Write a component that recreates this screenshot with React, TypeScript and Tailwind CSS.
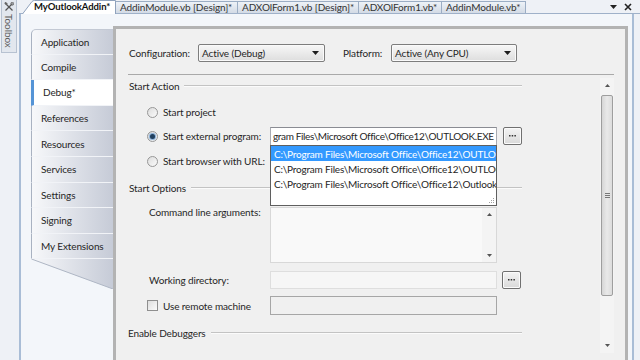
import React from "react";

function Radio({ checked }: { checked?: boolean }) {
  return (
    <span className="w-[11px] h-[11px] rounded-full border border-[#979797] bg-linear-to-br from-[#dcdcdc] to-[#fbfbfb] flex items-center justify-center shrink-0">
      {checked && <span className="w-[5px] h-[5px] rounded-full bg-[#21405f] shadow-[0_0_1px_1px_#7fa9d6]" />}
    </span>
  );
}

function Check() {
  return <span className="w-[11px] h-[11px] border border-[#8f8f8f] bg-linear-to-br from-[#dedede] to-[#fbfbfb] shrink-0" />;
}

function Combo({ text, w }: { text: string; w: string }) {
  return (
    <div className={`${w} h-[18px] border border-[#7d7d7d] rounded-[2px] bg-linear-to-b from-[#f7f7f7] to-[#dedede] flex items-center pl-[3px] pr-[5px] shadow-[inset_0_0_0_1px_#fafafa]`}>
      <span className="flex-1 whitespace-nowrap">{text}</span>
      <svg width="7" height="4" viewBox="0 0 7 4"><path d="M0 0h7L3.5 4z" fill="#1e1e1e" /></svg>
    </div>
  );
}

function Dots() {
  return (
    <div className="w-[19px] h-[18px] border border-[#707070] rounded-[2px] bg-linear-to-b from-[#f4f4f4] to-[#d9d9d9] flex items-center justify-center shrink-0 shadow-[inset_0_0_0_1px_#fbfbfb]">
      <svg width="7" height="2" viewBox="0 0 7 2"><rect x="0" y="0" width="1.5" height="1.5" fill="#333" /><rect x="2.7" y="0" width="1.5" height="1.5" fill="#333" /><rect x="5.4" y="0" width="1.5" height="1.5" fill="#333" /></svg>
    </div>
  );
}

function Group({ title, className }: { title: string; className: string }) {
  return (
    <div className={`flex items-center h-[14px] ${className}`}>
      <span className="whitespace-nowrap">{title}</span>
      <div className="flex-1 ml-[5px] h-[2px] border-t border-[#c3c3c3] border-b border-b-[#fbfbfb]" />
    </div>
  );
}

function UpArrow() {
  return <svg width="5" height="3" viewBox="0 0 5 3"><path d="M0 3h5L2.5 0z" fill="#555" /></svg>;
}
function DownArrow() {
  return <svg width="5" height="3" viewBox="0 0 5 3"><path d="M0 0h5L2.5 3z" fill="#555" /></svg>;
}

const navItems = ["Application", "Compile", "Debug*", "References", "Resources", "Services", "Settings", "Signing", "My Extensions"];

const P1 = "C:\\Program Files\\Microsoft Office\\Office12\\OUTLOOK.EXE";
const P3 = "C:\\Program Files\\Microsoft Office\\Office12\\Outlook.exe";

export default function App() {
  return (
    <div className="w-[640px] h-[360px] overflow-hidden flex bg-[#eef1f6] text-[#262626] font-['Lato',sans-serif] text-[10px] tracking-[-0.12px] leading-[14px]">
      {/* Toolbox strip */}
      <div className="w-[19px] shrink-0 pl-[1px]">
        <div className="w-[16px] h-[53px] border border-t-0 border-[#b7c2d1] bg-[#e2e7ee] flex flex-col items-center pt-[2px]">
          <svg width="10" height="10" viewBox="0 0 10 10">
            <path d="M1.5 1.5L8.5 8.5" stroke="#555" strokeWidth="1.3" />
            <path d="M8.5 1.5L1.5 8.5" stroke="#555" strokeWidth="1.3" />
            <rect x="0.5" y="0.5" width="3" height="2" fill="#666" transform="rotate(45 2 1.5)" />
            <circle cx="8.3" cy="1.7" r="1.4" fill="none" stroke="#666" strokeWidth="1" />
          </svg>
          <span className="[writing-mode:vertical-rl] text-[#5c5c5c] mt-[2px] leading-[14px]">Toolbox</span>
        </div>
      </div>

      <div className="flex-1 flex flex-col min-w-0">
        {/* Tab strip */}
        <div className="h-[14px] shrink-0 flex items-end border-b border-[#9fb1c9] pl-[3px]">
          <div className="relative w-[94px] h-[14px] -mb-px shrink-0">
            <svg className="absolute inset-0" width="94" height="14" viewBox="0 0 94 14">
              <path d="M0.5 14 L10 1.5 Q11 0.5 12.5 0.5 H93.5 V14" fill="#ffffff" stroke="#8fa2bc" />
            </svg>
            <span className="relative block pl-[12px] font-bold text-[9.5px] tracking-[-0.1px] text-[#111] leading-[13px] whitespace-nowrap">MyOutlookAddin*</span>
          </div>
          {[
            ["AddinModule.vb [Design]*", "w-[122px]"],
            ["ADXOlForm1.vb [Design]*", "w-[121px]"],
            ["ADXOlForm1.vb*", "w-[83px]"],
            ["AddinModule.vb*", "w-[84px]"],
          ].map(([t, w]) => (
            <div key={t} className={`${w} h-[12px] shrink-0 border-t border-r border-[#9badc4] bg-linear-to-b from-[#eef2f7] to-[#d3dbe6] pl-[4px] text-[#333] leading-[11px] whitespace-nowrap overflow-hidden`}>
              {t}
            </div>
          ))}
          <div className="ml-auto self-center flex items-center gap-[7px] pr-[8px]">
            <svg width="7" height="4" viewBox="0 0 7 4"><path d="M0 0h7L3.5 4z" fill="#222" /></svg>
            <svg width="8" height="8" viewBox="0 0 8 8"><path d="M1 1L7 7M7 1L1 7" stroke="#222" strokeWidth="1.6" /></svg>
          </div>
        </div>

        {/* Document body */}
        <div className="flex-1 min-h-0 mr-[6px] border-l-2 border-r-2 border-[#a9bdd6] bg-[#f3f6fa] pt-[12px] pl-[10px] pr-[4px] flex">
          {/* Nav */}
          <div className="w-[82px] shrink-0 mt-[3px] flex flex-col">
            {navItems.map((n, i) => {
              const sel = n === "Debug*";
              return (
                <div
                  key={n}
                  className={`h-[25.6px] shrink-0 flex items-center pl-[9px] border-b border-[#f1f3f7] ${i === 0 ? "rounded-tl-[5px] border-t border-t-[#c3c9d4]" : ""} ${sel ? "bg-white border-l-[3px] border-l-[#5594d6] pl-[7px]" : "bg-linear-to-r from-[#f7f8fa] to-[#c6cbd7] border-l border-l-[#a9b2c1]"}`}
                >
                  <span className="whitespace-nowrap">{n}</span>
                </div>
              );
            })}
            <svg width="82" height="30" viewBox="0 0 82 30" className="shrink-0">
              <defs>
                <linearGradient id="ng" x1="0" x2="1" y1="0" y2="0">
                  <stop offset="0" stopColor="#f7f8fa" />
                  <stop offset="1" stopColor="#c6cbd7" />
                </linearGradient>
              </defs>
              <path d="M0 0 H82 V30 Z" fill="url(#ng)" />
              <path d="M0.5 0 L82 30" stroke="#aeb6c4" strokeWidth="1" />
            </svg>
          </div>

          {/* Content panel */}
          <div className="flex-1 min-w-0 border-t-[3px] border-x-[3px] border-[#b3b3b3] bg-[#f0f0f0] pt-[15px] pl-[12px] pr-[11px] flex flex-col">
            <div className="h-[18px] flex items-center shrink-0">
              <span className="w-[70px] pl-[1px]">Configuration:</span>
              <Combo text="Active (Debug)" w="w-[127px]" />
              <span className="w-[48px] ml-[18px]">Platform:</span>
              <Combo text="Active (Any CPU)" w="w-[126px]" />
            </div>
            <div className="mt-[12px] h-px bg-[#a9a9a9] shrink-0" />

            <div className="flex-1 min-h-0 flex">
              <div className="w-[394px] shrink-0 relative flex flex-col">
                <Group title="Start Action" className="mt-[4px] pl-[1px]" />
                <div className="mt-[9px] h-[20px] pl-[19px] flex items-center">
                  <Radio />
                  <span className="ml-[5px]">Start project</span>
                </div>
                <div className="mt-[4px] h-[20px] pl-[19px] flex items-center">
                  <div className="w-[123px] flex items-center">
                    <Radio checked />
                    <span className="ml-[5px] whitespace-nowrap">Start external program:</span>
                  </div>
                  <div className="w-[227px] h-[19px] border border-[#a9abb2] border-t-[#8a8c93] bg-white flex items-center pl-[2px] overflow-hidden whitespace-nowrap tracking-[-0.35px]">
                    gram Files\Microsoft Office\Office12\OUTLOOK.EXE
                  </div>
                  <div className="ml-[6px]"><Dots /></div>
                </div>
                <div className="mt-[5px] h-[20px] pl-[19px] flex items-center">
                  <Radio />
                  <span className="ml-[5px] whitespace-nowrap">Start browser with URL:</span>
                </div>
                <Group title="Start Options" className="mt-[10px] pl-[1px]" />
                <div className="mt-[12px] pl-[21px] flex items-start">
                  <span className="w-[121px] -mt-[2px] whitespace-nowrap">Command line arguments:</span>
                  <div className="w-[227px] h-[56px] border border-[#d8d8d8] bg-[#f9f9f9] flex justify-end">
                    <div className="w-[14px] flex flex-col items-center justify-between py-[5px] bg-[#f4f4f4]">
                      <UpArrow />
                      <DownArrow />
                    </div>
                  </div>
                </div>
                <div className="mt-[8px] h-[18px] pl-[21px] flex items-center">
                  <span className="w-[121px] whitespace-nowrap">Working directory:</span>
                  <div className="w-[227px] h-[18px] border border-[#dedede] bg-[#f6f6f6]" />
                  <div className="ml-[5px]"><Dots /></div>
                </div>
                <div className="mt-[7px] h-[19px] pl-[19px] flex items-center">
                  <div className="w-[123px] flex items-center">
                    <Check />
                    <span className="ml-[5px] whitespace-nowrap">Use remote machine</span>
                  </div>
                  <div className="w-[227px] h-[19px] border border-[#a6a6a6] bg-[#f0f0f0]" />
                </div>
                <Group title="Enable Debuggers" className="mt-[11px]" />

                {/* Autocomplete dropdown */}
                <div className="absolute left-[142px] top-[70px] w-[227px] h-[61px] border border-[#5f5f5f] bg-white z-10 overflow-hidden tracking-[-0.2px]">
                  <div className="h-[15px] bg-[#3399ff] text-white pl-[3px] flex items-center whitespace-nowrap">{P1}</div>
                  <div className="h-[15px] pl-[3px] flex items-center whitespace-nowrap">{P1}</div>
                  <div className="h-[15px] pl-[3px] flex items-center whitespace-nowrap">{P3}</div>
                  <svg className="absolute right-[1px] bottom-[1px]" width="7" height="7" viewBox="0 0 7 7">
                    <rect x="5" y="1" width="1" height="1" fill="#a0a0a0" />
                    <rect x="3" y="3" width="1" height="1" fill="#a0a0a0" />
                    <rect x="5" y="3" width="1" height="1" fill="#a0a0a0" />
                    <rect x="1" y="5" width="1" height="1" fill="#a0a0a0" />
                    <rect x="3" y="5" width="1" height="1" fill="#a0a0a0" />
                    <rect x="5" y="5" width="1" height="1" fill="#a0a0a0" />
                  </svg>
                </div>
              </div>
              <div className="flex-1" />
              {/* Scrollbar */}
              <div className="w-[14px] shrink-0 mt-[3px] mb-[7px] flex flex-col bg-[#f4f4f4]">
                <div className="h-[15px] flex items-center justify-center"><UpArrow /></div>
                <div className="mt-[2px] h-[201px] mx-[1px] border border-[#9e9e9e] rounded-[2px] bg-linear-to-r from-[#d6d6d6] via-[#e9e9e9] to-[#dcdcdc] flex flex-col items-center justify-center gap-[1px]">
                  <div className="w-[5px] h-px bg-[#777]" />
                  <div className="w-[5px] h-px bg-[#777]" />
                  <div className="w-[5px] h-px bg-[#777]" />
                </div>
                <div className="flex-1" />
                <div className="h-[15px] flex items-center justify-center"><DownArrow /></div>
              </div>
            </div>
          </div>
        </div>
      </div>
    </div>
  );
}
